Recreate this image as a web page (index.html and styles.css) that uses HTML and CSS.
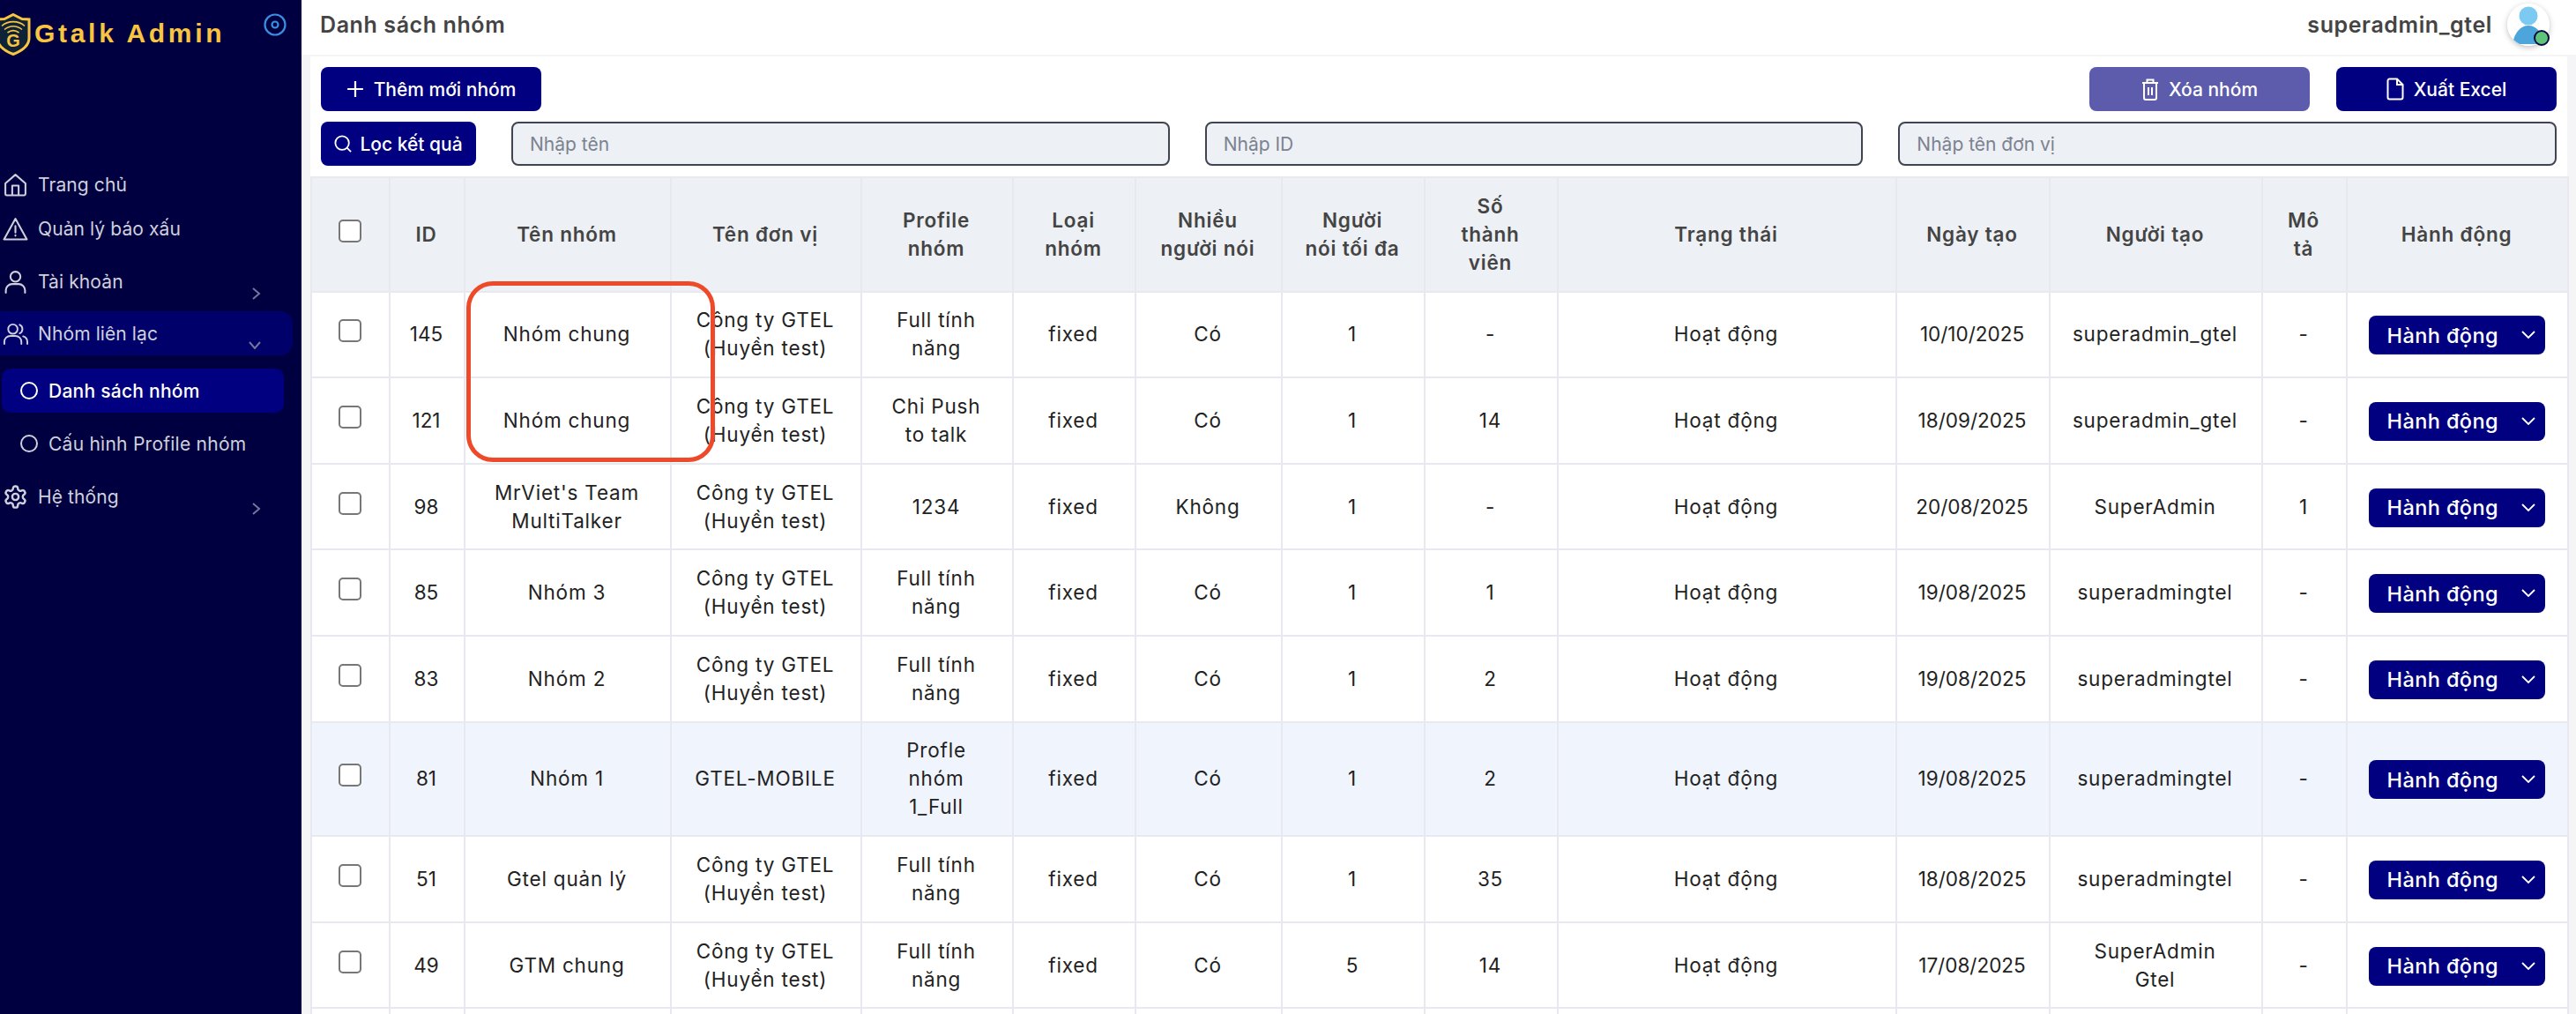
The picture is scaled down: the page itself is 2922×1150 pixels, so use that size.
FILE: index.html
```html
<!DOCTYPE html>
<html lang="vi">

<head>
    <meta charset="UTF-8" />
    <meta name="viewport" content="width=device-width, initial-scale=1.0" />
    <title>Danh sách nhóm</title>
    <link rel="stylesheet" href="styles.css">
</head>

<body>
    <aside class="sidebar">
        <div class="brand">
            <svg class="brand-logo" viewBox="0 0 40 48">
                <path d="M20 1.500 30 6.500 38 7V28C38 37 29 43 20 46.500 11 43 2 37 2 28V7L10 6.500Z" fill="#0e2338" stroke="#f9c440" stroke-width="3" />
                <path d="M7 14.500C14 8 26 8 33 14.500M10 18.500C16 13.500 24 13.500 30 18.500M13.500 22C17.500 19 22.500 19 26.500 22" fill="none" stroke="#f9c440" stroke-width="1.600" />
                <text x="20" y="38" text-anchor="middle" class="brand-g">G</text>
            </svg>
            <div class="brand-name">Gtalk Admin</div>
            <svg class="brand-toggle" viewBox="0 0 26 26" fill="none" stroke="#3b8ee0" stroke-width="2.200">
                <circle cx="13" cy="13" r="11.500" />
                <circle cx="13" cy="13" r="3.500" />
            </svg>
        </div>

        <nav class="menu">
            <a class="menu-item first">
                <svg class="menu-icon" viewBox="0 0 28 28"><path d="M3 12.500 14 3l11 9.500V24a1.500 1.500 0 0 1-1.500 1.500h-19A1.500 1.500 0 0 1 3 24ZM10.500 25.500V15h7v10.500" /></svg>
                <span>Trang chủ</span>
            </a>
            <a class="menu-item alert">
                <svg class="menu-icon" viewBox="0 0 28 28"><path d="M14 3 1.500 25.500h25ZM14 11v7M14 21v.6" /></svg>
                <span>Quản lý báo xấu</span>
            </a>
            <a class="menu-item">
                <svg class="menu-icon" viewBox="0 0 28 28"><circle cx="14" cy="8.500" r="5.500" /><path d="M3.500 26v-2.500a7 7 0 0 1 7-7h7a7 7 0 0 1 7 7V26" /></svg>
                <span>Tài khoản</span>
                <svg class="menu-chevron" viewBox="0 0 12 16"><path d="M2 2l7 6-7 6" /></svg>
            </a>
            <a class="menu-item open">
                <svg class="menu-icon" viewBox="0 0 30 28"><circle cx="12" cy="8.500" r="5.500" /><path d="M2 26v-2.500a7 7 0 0 1 7-7h6a7 7 0 0 1 7 7V26M20 3.500a5.500 5.500 0 0 1 0 10M24 17a7 7 0 0 1 5 6.500V26" /></svg>
                <span>Nhóm liên lạc</span>
                <svg class="menu-chevron down" viewBox="0 0 16 12"><path d="M2 2l6 7 6-7" /></svg>
            </a>
            <a class="sub-item active">
                <span class="sub-dot"></span>
                <span>Danh sách nhóm</span>
            </a>
            <a class="sub-item">
                <span class="sub-dot"></span>
                <span>Cấu hình Profile nhóm</span>
            </a>
            <a class="menu-item">
                <svg class="menu-icon" viewBox="0 0 24 24"><path d="M12.220 2h-.44a2 2 0 0 0-2 2v.18a2 2 0 0 1-1 1.730l-.43.25a2 2 0 0 1-2 0l-.15-.08a2 2 0 0 0-2.730.73l-.22.38a2 2 0 0 0 .73 2.730l.15.1a2 2 0 0 1 1 1.720v.51a2 2 0 0 1-1 1.740l-.15.09a2 2 0 0 0-.73 2.730l.22.38a2 2 0 0 0 2.730.73l.15-.08a2 2 0 0 1 2 0l.43.25a2 2 0 0 1 1 1.730V20a2 2 0 0 0 2 2h.44a2 2 0 0 0 2-2v-.18a2 2 0 0 1 1-1.730l.43-.25a2 2 0 0 1 2 0l.15.08a2 2 0 0 0 2.730-.73l.22-.39a2 2 0 0 0-.73-2.730l-.15-.08a2 2 0 0 1-1-1.740v-.5a2 2 0 0 1 1-1.740l.15-.09a2 2 0 0 0 .73-2.730l-.22-.38a2 2 0 0 0-2.730-.73l-.15.08a2 2 0 0 1-2 0l-.43-.25a2 2 0 0 1-1-1.730V4a2 2 0 0 0-2-2z" /><circle cx="12" cy="12" r="3" /></svg>
                <span>Hệ thống</span>
                <svg class="menu-chevron" viewBox="0 0 12 16"><path d="M2 2l7 6-7 6" /></svg>
            </a>
        </nav>
    </aside>

    <main class="main">
        <header class="topbar">
            <h1 class="page-title">Danh sách nhóm</h1>
            <div class="user">
                <span class="user-name">superadmin_gtel</span>
                <div class="avatar">
                    <svg viewBox="0 0 48 48">
                        <circle cx="24" cy="24" r="24" fill="#fff" />
                        <circle cx="24" cy="14" r="10.500" fill="#7cc9f1" />
                        <path d="M6 46C8 33 15 25 24 25s16 8 18 21Z" fill="#4ca6dc" />
                    </svg>
                    <span class="avatar-dot"></span>
                </div>
            </div>
        </header>

        <section class="toolbar">
            <div class="toolbar-row">
                <button class="btn btn-add">
                    <svg class="btn-icon" viewBox="0 0 18 18"><path d="M9 1v16M1 9h16" /></svg>
                    Thêm mới nhóm
                </button>
                <div class="toolbar-right">
                    <button class="btn btn-wide btn-muted">
                        <svg class="btn-icon" viewBox="0 0 20 26"><path d="M1 6h18M6.500 6V2.500h7V6M3 6v17a2 2 0 0 0 2 2h10a2 2 0 0 0 2-2V6M8 11v9M12 11v9" /></svg>
                        Xóa nhóm
                    </button>
                    <button class="btn btn-wide">
                        <svg class="btn-icon" viewBox="0 0 20 26"><path d="M12 1.500H3.500a2 2 0 0 0-2 2v19a2 2 0 0 0 2 2h13a2 2 0 0 0 2-2V8ZM12 1.500V8h6.500" /></svg>
                        Xuất Excel
                    </button>
                </div>
            </div>
            <div class="toolbar-row filters">
                <button class="btn btn-filter">
                    <svg class="btn-icon" viewBox="0 0 22 22"><circle cx="10" cy="10" r="8.500" /><path d="M16 16l5 5" /></svg>
                    Lọc kết quả
                </button>
                <input class="filter-input" placeholder="Nhập tên">
                <input class="filter-input" placeholder="Nhập ID">
                <input class="filter-input" placeholder="Nhập tên đơn vị">
            </div>
        </section>

        <div class="table-wrap">
            <table class="group-table">
                <colgroup>
                    <col class="c-check"><col class="c-id"><col class="c-name"><col class="c-unit"><col class="c-profile">
                    <col class="c-type"><col class="c-multi"><col class="c-max"><col class="c-members"><col class="c-status">
                    <col class="c-date"><col class="c-creator"><col class="c-desc"><col class="c-action">
                </colgroup>
                <thead>
                    <tr>
                        <th><span class="check"></span></th>
                        <th>ID</th>
                        <th>Tên nhóm</th>
                        <th>Tên đơn vị</th>
                        <th>Profile<br>nhóm</th>
                        <th>Loại<br>nhóm</th>
                        <th>Nhiều<br>người nói</th>
                        <th>Người<br>nói tối đa</th>
                        <th>Số<br>thành<br>viên</th>
                        <th>Trạng thái</th>
                        <th>Ngày tạo</th>
                        <th>Người tạo</th>
                        <th>Mô<br>tả</th>
                        <th>Hành động</th>
                    </tr>
                </thead>
                <tbody>
                    <tr>
                        <td><span class="check"></span></td><td>145</td><td>Nhóm chung</td><td>Công ty GTEL<br>(Huyền test)</td><td>Full tính<br>năng</td>
                        <td>fixed</td><td>Có</td><td>1</td><td>-</td><td>Hoạt động</td><td>10/10/2025</td><td>superadmin_gtel</td><td>-</td>
                        <td><button class="row-action">Hành động<svg viewBox="0 0 16 10"><path d="M1 1l7 7 7-7" /></svg></button></td>
                    </tr>
                    <tr>
                        <td><span class="check"></span></td><td>121</td><td>Nhóm chung</td><td>Công ty GTEL<br>(Huyền test)</td><td>Chỉ Push<br>to talk</td>
                        <td>fixed</td><td>Có</td><td>1</td><td>14</td><td>Hoạt động</td><td>18/09/2025</td><td>superadmin_gtel</td><td>-</td>
                        <td><button class="row-action">Hành động<svg viewBox="0 0 16 10"><path d="M1 1l7 7 7-7" /></svg></button></td>
                    </tr>
                    <tr>
                        <td><span class="check"></span></td><td>98</td><td>MrViet's Team<br>MultiTalker</td><td>Công ty GTEL<br>(Huyền test)</td><td>1234</td>
                        <td>fixed</td><td>Không</td><td>1</td><td>-</td><td>Hoạt động</td><td>20/08/2025</td><td>SuperAdmin</td><td>1</td>
                        <td><button class="row-action">Hành động<svg viewBox="0 0 16 10"><path d="M1 1l7 7 7-7" /></svg></button></td>
                    </tr>
                    <tr>
                        <td><span class="check"></span></td><td>85</td><td>Nhóm 3</td><td>Công ty GTEL<br>(Huyền test)</td><td>Full tính<br>năng</td>
                        <td>fixed</td><td>Có</td><td>1</td><td>1</td><td>Hoạt động</td><td>19/08/2025</td><td>superadmingtel</td><td>-</td>
                        <td><button class="row-action">Hành động<svg viewBox="0 0 16 10"><path d="M1 1l7 7 7-7" /></svg></button></td>
                    </tr>
                    <tr>
                        <td><span class="check"></span></td><td>83</td><td>Nhóm 2</td><td>Công ty GTEL<br>(Huyền test)</td><td>Full tính<br>năng</td>
                        <td>fixed</td><td>Có</td><td>1</td><td>2</td><td>Hoạt động</td><td>19/08/2025</td><td>superadmingtel</td><td>-</td>
                        <td><button class="row-action">Hành động<svg viewBox="0 0 16 10"><path d="M1 1l7 7 7-7" /></svg></button></td>
                    </tr>
                    <tr class="hovered">
                        <td><span class="check"></span></td><td>81</td><td>Nhóm 1</td><td>GTEL-MOBILE</td><td>Profle<br>nhóm<br>1_Full</td>
                        <td>fixed</td><td>Có</td><td>1</td><td>2</td><td>Hoạt động</td><td>19/08/2025</td><td>superadmingtel</td><td>-</td>
                        <td><button class="row-action">Hành động<svg viewBox="0 0 16 10"><path d="M1 1l7 7 7-7" /></svg></button></td>
                    </tr>
                    <tr>
                        <td><span class="check"></span></td><td>51</td><td>Gtel quản lý</td><td>Công ty GTEL<br>(Huyền test)</td><td>Full tính<br>năng</td>
                        <td>fixed</td><td>Có</td><td>1</td><td>35</td><td>Hoạt động</td><td>18/08/2025</td><td>superadmingtel</td><td>-</td>
                        <td><button class="row-action">Hành động<svg viewBox="0 0 16 10"><path d="M1 1l7 7 7-7" /></svg></button></td>
                    </tr>
                    <tr>
                        <td><span class="check"></span></td><td>49</td><td>GTM chung</td><td>Công ty GTEL<br>(Huyền test)</td><td>Full tính<br>năng</td>
                        <td>fixed</td><td>Có</td><td>5</td><td>14</td><td>Hoạt động</td><td>17/08/2025</td><td>SuperAdmin<br>Gtel</td><td>-</td>
                        <td><button class="row-action">Hành động<svg viewBox="0 0 16 10"><path d="M1 1l7 7 7-7" /></svg></button></td>
                    </tr>
                    <tr class="row-cut">
                        <td></td><td></td><td></td><td></td><td></td><td></td><td></td><td></td><td></td><td></td><td></td><td></td><td></td><td></td>
                    </tr>
                </tbody>
            </table>
        </div>
    </main>

    <!-- red annotation drawn over the screenshot -->
    <div class="mark"></div>
</body>

</html>
```

FILE: styles.css
```css
* {
    box-sizing: border-box;
}

html,
body {
    margin: 0;
    height: 100%;
}

body {
    display: flex;
    height: 1150px;
    overflow: hidden;
    background-color: #f5f5f8;
    font-family: Inter, "Noto Sans", sans-serif;
    font-size: 22px;
    color: #222;
}

/* sidebar */
.sidebar {
    width: 342px;
    flex-shrink: 0;
    background-color: #000040;
    overflow: hidden;
}

.brand {
    display: flex;
    align-items: flex-start;
    height: 184px;
    padding-top: 15px;
}

.brand-logo {
    width: 40px;
    height: 48px;
    margin-left: -5px;
    flex-shrink: 0;
}

.brand-g {
    font-family: "Liberation Sans", sans-serif;
    font-size: 20px;
    font-weight: 700;
    fill: #f9c440;
}

.brand-name {
    margin: 3px 0 0 4px;
    font-family: "Liberation Sans", sans-serif;
    font-size: 30px;
    line-height: 40px;
    font-weight: 700;
    letter-spacing: 3.7px;
    color: #f9c440;
    white-space: nowrap;
}

.brand-toggle {
    width: 26px;
    height: 26px;
    margin-left: auto;
    margin-right: 17px;
}

.menu {
    display: flex;
    flex-direction: column;
    gap: 10px;
}

.menu-item {
    display: flex;
    align-items: center;
    gap: 11px;
    width: 332px;
    height: 50px;
    padding: 0 35px 0 3px;
    color: #cfd0dc;
    font-size: 21px;
    letter-spacing: 0.1px;
}

.menu-item.alert {
    margin-top: -10px;
}

.menu-item.open {
    margin-top: -1px;
    background-color: #00006a;
    border-radius: 0 14px 14px 0;
}

.menu-icon {
    width: 29px;
    height: 29px;
    flex-shrink: 0;
    fill: none;
    stroke: #cfd0dc;
    stroke-width: 2;
    stroke-linejoin: round;
    stroke-linecap: round;
}

.menu-chevron {
    width: 12px;
    height: 16px;
    margin: 28px 0 0 auto;
    fill: none;
    stroke: #74769a;
    stroke-width: 2;
}

.menu-chevron.down {
    width: 16px;
    height: 12px;
}

.sub-item {
    display: flex;
    align-items: center;
    gap: 12px;
    width: 320px;
    height: 50px;
    margin-left: 2px;
    padding-left: 21px;
    border-radius: 10px;
    color: #cfd0dc;
    font-size: 21px;
    letter-spacing: 0.25px;
}

.sub-item.active {
    margin-top: 5px;
    background-color: #000080;
    color: #fff;
    font-weight: 500;
}

.sub-dot {
    width: 20px;
    height: 20px;
    border: 2px solid currentColor;
    border-radius: 50%;
}

/* main */
.main {
    flex: 1;
    min-width: 0;
}

.topbar {
    display: flex;
    justify-content: space-between;
    align-items: center;
    height: 62px;
    padding: 0 30px 6px 21px;
    background-color: #fff;
}

.page-title {
    margin: 0;
    font-size: 25px;
    font-weight: 600;
    letter-spacing: 0.6px;
    color: #444;
}

.user {
    display: flex;
    align-items: center;
    gap: 17px;
}

.user-name {
    font-size: 25px;
    font-weight: 600;
    letter-spacing: 0.6px;
    color: #444;
}

.avatar {
    position: relative;
    width: 48px;
    height: 48px;
    border-radius: 50%;
    box-shadow: 0 2px 6px rgba(0, 0, 0, 0.25);
}

.avatar svg {
    display: block;
    border-radius: 50%;
}

.avatar-dot {
    position: absolute;
    right: 0;
    bottom: 0;
    width: 18px;
    height: 18px;
    background-color: #5fc47a;
    border: 2px solid #0a0a40;
    border-radius: 50%;
}

.toolbar {
    margin: 2px 10px 0;
    padding: 12px 12px 12px 12px;
    background-color: #fff;
}

.toolbar-row {
    display: flex;
    justify-content: space-between;
}

.toolbar-right {
    display: flex;
    gap: 30px;
}

.filters {
    justify-content: flex-start;
    gap: 40px;
    margin-top: 12px;
}

.btn {
    display: flex;
    justify-content: center;
    align-items: center;
    gap: 11px;
    width: 250px;
    height: 50px;
    padding: 0;
    border: none;
    border-radius: 8px;
    background-color: #000080;
    color: #fff;
    font-family: inherit;
    font-size: 21px;
    font-weight: 500;
}

.btn-muted {
    background-color: #5c5bac;
}

.btn-filter {
    width: 176px;
    flex-shrink: 0;
    gap: 9px;
}

.btn-icon {
    height: 20px;
    width: 20px;
    flex-shrink: 0;
    fill: none;
    stroke: #fff;
    stroke-width: 2;
}

.btn-wide .btn-icon {
    height: 26px;
    width: 20px;
}

.filter-input {
    flex: 1;
    min-width: 0;
    height: 50px;
    padding: 0 19px;
    border: 2px solid #3f4450;
    border-radius: 8px;
    background-color: #edf0f4;
    font-family: inherit;
    font-size: 21px;
}

.filter-input::placeholder {
    color: #7b8290;
}

/* table */
.table-wrap {
    margin: 0 9px 0 10px;
}

.group-table {
    width: 2560px;
    table-layout: fixed;
    border-collapse: collapse;
    text-align: center;
    font-size: 22.5px;
    letter-spacing: 0.8px;
    line-height: 32px;
}

.c-check { width: 89px; }
.c-id { width: 85px; }
.c-name { width: 234px; }
.c-unit { width: 216px; }
.c-profile { width: 172px; }
.c-type { width: 139px; }
.c-multi { width: 166px; }
.c-max { width: 162px; }
.c-members { width: 151px; }
.c-status { width: 384px; }
.c-date { width: 174px; }
.c-creator { width: 241px; }
.c-desc { width: 96px; }
.c-action { width: 251px; }

.group-table th,
.group-table td {
    padding: 15.8px 2px 15.8px 0;
    border: 2px solid #e8e8f1;
    background-color: #fff;
    font-weight: 400;
}

.group-table th {
    background-color: #edf0f4;
    color: #444;
    font-weight: 600;
}

.group-table .hovered td {
    background-color: #f0f4fd;
}

/* id and date columns, the digits run wide in this font */
.group-table td:nth-child(2),
.group-table td:nth-child(11) {
    letter-spacing: 0;
}

.row-cut td {
    height: 98px;
}

.check {
    display: block;
    width: 26px;
    height: 26px;
    margin: -8px auto 0;
    background-color: #fff;
    border: 2px solid #777;
    border-radius: 5px;
}

.row-action {
    display: flex;
    justify-content: space-between;
    align-items: center;
    width: 200px;
    height: 44px;
    margin: 1px auto -1px;
    padding: 0 11px 0 21px;
    border: none;
    border-radius: 8px;
    background-color: #000080;
    color: #fff;
    font-family: inherit;
    font-size: 23.5px;
    font-weight: 500;
    letter-spacing: 0.4px;
}

.row-action svg {
    width: 16px;
    height: 10px;
    fill: none;
    stroke: #fff;
    stroke-width: 1.800;
}

/* annotation */
.mark {
    position: absolute;
    left: 529px;
    top: 319px;
    width: 282px;
    height: 205px;
    border: 5px solid #ee4a2a;
    border-radius: 30px;
}
```
